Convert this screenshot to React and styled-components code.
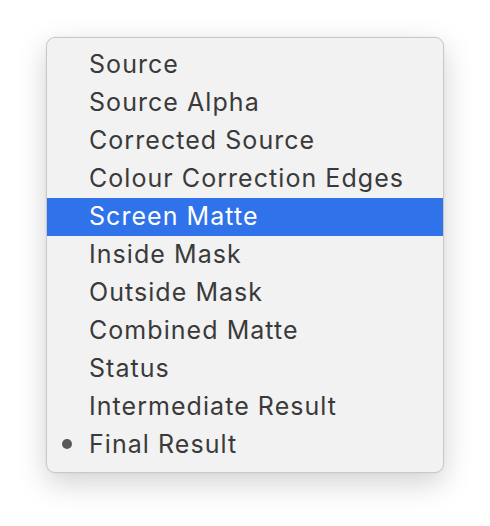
import styled, { createGlobalStyle } from "styled-components";

const Global = createGlobalStyle`
  html, body {
    margin: 0;
    padding: 0;
    background: #ffffff;
  }
`;

const Page = styled.div`
  width: 490px;
  height: 526px;
  padding: 37px 0 0 46px;
  box-sizing: border-box;
`;

const Menu = styled.ul`
  list-style: none;
  margin: 0;
  width: 398px;
  box-sizing: border-box;
  padding: 8px 0 8px;
  background: #f2f2f2;
  border: 1px solid #c9c9c9;
  border-radius: 9px;
  box-shadow: 0 10px 30px rgba(0, 0, 0, 0.18), 0 0 2px rgba(0, 0, 0, 0.08);
`;

const Item = styled.li`
  position: relative;
  height: 38px;
  display: flex;
  align-items: center;
  padding-left: 42px;
  padding-bottom: 2px;
  box-sizing: border-box;
  font-family: Inter, "Liberation Sans", sans-serif;
  font-size: 25px;
  letter-spacing: 1.05px;
  color: ${(p) => (p.$active ? "#ffffff" : "#3a3a3a")};
  background: ${(p) => (p.$active ? "#2f72e9" : "transparent")};
`;

const Bullet = styled.span`
  position: absolute;
  left: 15px;
  top: 50%;
  width: 10px;
  height: 10px;
  margin-top: -6px;
  border-radius: 50%;
  background: #585858;
`;

const items = [
  "Source",
  "Source Alpha",
  "Corrected Source",
  "Colour Correction Edges",
  "Screen Matte",
  "Inside Mask",
  "Outside Mask",
  "Combined Matte",
  "Status",
  "Intermediate Result",
  "Final Result",
];

export default function App() {
  return (
    <Page>
      <Global />
      <Menu>
        {items.map((label) => (
          <Item key={label} $active={label === "Screen Matte"}>
            {label === "Final Result" && <Bullet />}
            {label}
          </Item>
        ))}
      </Menu>
    </Page>
  );
}
